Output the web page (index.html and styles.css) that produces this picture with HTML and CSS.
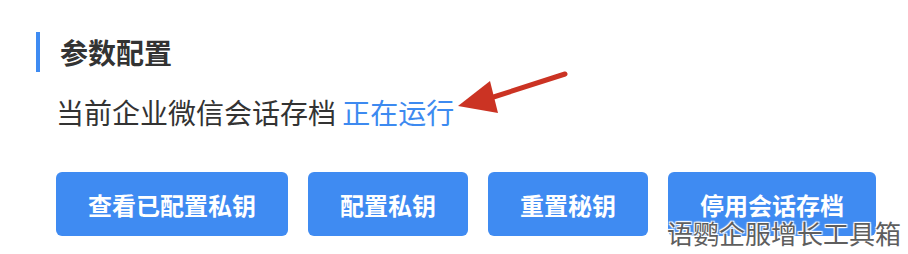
FILE: index.html
```html
<!DOCTYPE html>
<html lang="zh">
<head>
<meta charset="utf-8">
<link rel="stylesheet" href="styles.css">
</head>
<body>
<div class="page">
  <div class="section-title">参数配置</div>
  <div class="status">当前企业微信会话存档 <span class="running">正在运行</span></div>
  <div class="actions">
    <button class="btn">查看已配置私钥</button>
    <button class="btn">配置私钥</button>
    <button class="btn">重置秘钥</button>
    <button class="btn">停用会话存档</button>
  </div>
  <svg class="arrow" width="130" height="60" viewBox="0 0 130 60">
    <line x1="124" y1="14" x2="40" y2="41" stroke="#cb3323" stroke-width="5" stroke-linecap="round"/>
    <polygon points="17,46 49,21 57,53" fill="#cb3323"/>
  </svg>
  <div class="watermark">语鹦企服增长工具箱</div>
</div>
</body>
</html>
```
FILE: styles.css
```css
html, body {
  margin: 0;
  padding: 0;
  background: #ffffff;
}
body {
  width: 908px;
  height: 254px;
  overflow: hidden;
  font-family: "Noto Sans CJK SC", "Noto Sans", sans-serif;
}
.page {
  position: relative;
  padding: 32px 0 0 36px;
}
.section-title {
  border-left: 4px solid #3e8bf2;
  padding-left: 20px;
  height: 40px;
  line-height: 40px;
  font-size: 28px;
  font-weight: 700;
  color: #333333;
}
.status {
  margin-top: 22px;
  padding-left: 20px;
  font-size: 28px;
  line-height: 36px;
  color: #333333;
}
.running {
  color: #3d8af0;
}
.actions {
  display: flex;
  gap: 20px;
  margin-top: 42px;
  padding-left: 20px;
}
.btn {
  height: 64px;
  padding: 0 32px;
  border: none;
  border-radius: 6px;
  background: #3f8bf2;
  color: #ffffff;
  font-family: inherit;
  font-size: 24px;
  font-weight: 700;
  cursor: pointer;
}
.arrow {
  position: absolute;
  left: 441px;
  top: 60px;
}
.watermark {
  position: absolute;
  left: 667px;
  top: 216px;
  font-size: 26px;
  line-height: 34px;
  color: #5e5e5e;
  text-shadow: 1px 1px 1px #ffffff, -1px -1px 1px #ffffff, 1px -1px 1px #ffffff, -1px 1px 1px #ffffff;
}
```
